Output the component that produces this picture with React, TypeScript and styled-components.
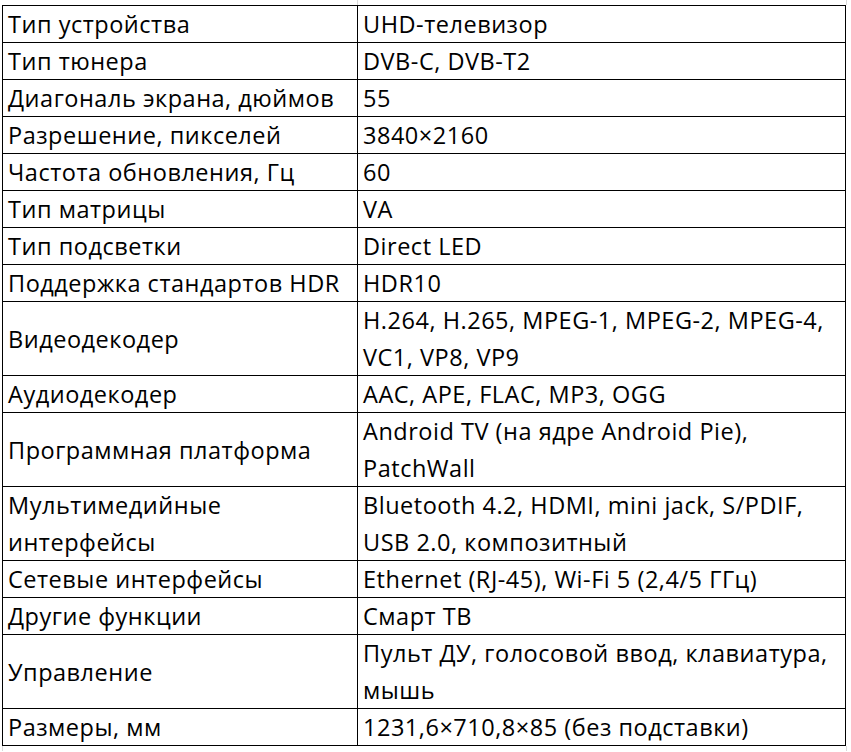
import React from "react";
import styled, { createGlobalStyle } from "styled-components";

const GlobalStyle = createGlobalStyle`
  html, body {
    margin: 0;
    padding: 0;
    background: #ffffff;
  }
  body {
    font-family: "Open Sans", "Liberation Sans", sans-serif;
    color: #000000;
  }
`;

const Page = styled.div`
  display: flex;
  flex-direction: column;
  width: 851px;
`;

const GridStrip = styled.div`
  display: flex;
  height: 5px;
`;

const StripSegment = styled.div<{ $width: number }>`
  box-sizing: border-box;
  width: ${(p) => p.$width}px;
  height: 100%;
  border-right: 1px solid #d9d9d9;
`;

const Sheet = styled.div`
  margin-left: 2px;
  width: 844px;
  box-sizing: border-box;
  border-top: 1px solid #000;
  border-left: 1px solid #000;
  display: grid;
  grid-template-columns: 355px 488px;
`;

const Cell = styled.div<{ $lines: number }>`
  box-sizing: border-box;
  height: ${(p) => p.$lines * 37}px;
  border-right: 1px solid #000;
  border-bottom: 1px solid #000;
  padding: 0 2px 0 5px;
  display: flex;
  align-items: center;
  font-size: 23.5px;
  letter-spacing: 0.52px;
  line-height: 37px;
  white-space: nowrap;
  overflow: hidden;
`;

const CellText = styled.span`
  display: flex;
  flex-direction: column;
  margin-top: 1px;
`;

type Spec = { label: string[]; value: string[] };

const specs: Spec[] = [
  { label: ["Тип устройства"], value: ["UHD-телевизор"] },
  { label: ["Тип тюнера"], value: ["DVB-C, DVB-T2"] },
  { label: ["Диагональ экрана, дюймов"], value: ["55"] },
  { label: ["Разрешение, пикселей"], value: ["3840×2160"] },
  { label: ["Частота обновления, Гц"], value: ["60"] },
  { label: ["Тип матрицы"], value: ["VA"] },
  { label: ["Тип подсветки"], value: ["Direct LED"] },
  { label: ["Поддержка стандартов HDR"], value: ["HDR10"] },
  {
    label: ["Видеодекодер"],
    value: ["H.264, H.265, MPEG-1, MPEG-2, MPEG-4,", "VC1, VP8, VP9"],
  },
  { label: ["Аудиодекодер"], value: ["AAC, APE, FLAC, MP3, OGG"] },
  {
    label: ["Программная платформа"],
    value: ["Android TV (на ядре Android Pie),", "PatchWall"],
  },
  {
    label: ["Мультимедийные", "интерфейсы"],
    value: ["Bluetooth 4.2, HDMI, mini jack, S/PDIF,", "USB 2.0, композитный"],
  },
  { label: ["Сетевые интерфейсы"], value: ["Ethernet (RJ-45), Wi-Fi 5 (2,4/5 ГГц)"] },
  { label: ["Другие функции"], value: ["Смарт ТВ"] },
  {
    label: ["Управление"],
    value: ["Пульт ДУ, голосовой ввод, клавиатура,", "мышь"],
  },
  { label: ["Размеры, мм"], value: ["1231,6×710,8×85 (без подставки)"] },
];

export default function App() {
  return (
    <Page>
      <GlobalStyle />
      <GridStrip>
        <StripSegment $width={358} />
        <StripSegment $width={489} />
      </GridStrip>
      <Sheet>
        {specs.map((s) => {
          const lines = Math.max(s.label.length, s.value.length);
          return (
            <React.Fragment key={s.label.join(" ")}>
              <Cell $lines={lines}>
                <CellText>
                  {s.label.map((l) => (
                    <span key={l}>{l}</span>
                  ))}
                </CellText>
              </Cell>
              <Cell $lines={lines}>
                <CellText>
                  {s.value.map((l) => (
                    <span key={l}>{l}</span>
                  ))}
                </CellText>
              </Cell>
            </React.Fragment>
          );
        })}
      </Sheet>
      <GridStrip>
        <StripSegment $width={3} />
        <StripSegment $width={844} />
      </GridStrip>
    </Page>
  );
}
